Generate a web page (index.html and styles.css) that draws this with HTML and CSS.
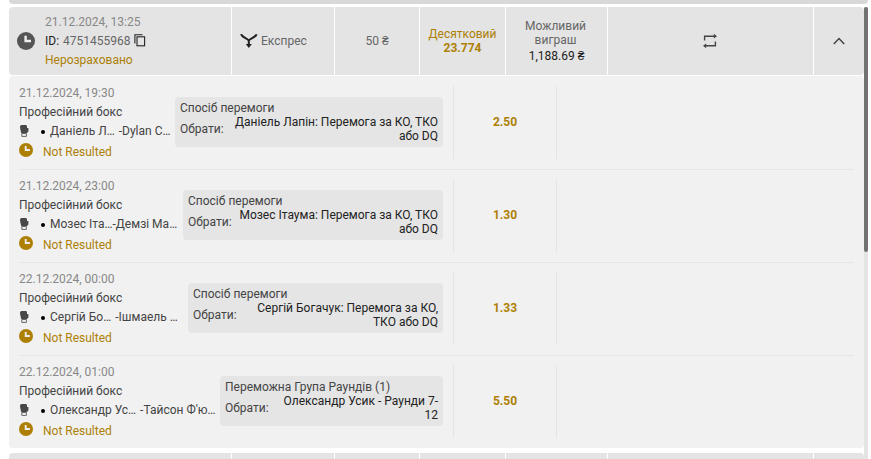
FILE: index.html
```html
<!DOCTYPE html>
<html lang="uk">
<head>
    <meta charset="UTF-8">
    <meta name="viewport" content="width=device-width, initial-scale=1.0">
    <title>Історія ставок</title>
    <link rel="stylesheet" href="styles.css">
</head>
<body>
    <svg class="sprite">
        <symbol id="clock" viewBox="0 0 18 18">
            <circle cx="9" cy="9" r="9" fill="currentColor"/>
            <path d="M8.6 3.8V9H14" fill="none" stroke="#eee" stroke-width="2.4"/>
        </symbol>
        <symbol id="glove" viewBox="0 0 10 12">
            <path d="M2.5 0H7Q8 0 8 1.5V3H9.4V6.4L8 8H2.2Q1 4 1 1.5Q1.2 0 2.5 0Z" fill="#484848"/>
            <path d="M2.8 8.5V11.4H7.4V8.5Z" fill="none" stroke="#666" stroke-width="1"/>
        </symbol>
    </svg>

    <div class="list-head"></div>
    <div class="history">
        <div class="bets">
            <div class="bet">
                <div class="cell bet-info">
                    <svg class="bet-clock"><use href="#clock"/></svg>
                    <div>
                        <div class="date">21.12.2024, 13:25</div>
                        <div class="bet-id"><b>ID:</b> <span>4751455968</span>
                            <svg width="12" height="13" viewBox="0 0 12 13" fill="none" stroke="#222" stroke-width="1.1"><path d="M.9 9.5V.7H8.5"/><rect x="3" y="2.8" width="7.6" height="9"/></svg>
                        </div>
                        <div class="gold">Нерозраховано</div>
                    </div>
                </div>
                <div class="cell type">
                    <svg width="18" height="16" viewBox="0 0 18 16" fill="none" stroke="#222" stroke-width="2"><path d="M1.2 1.2C1.5 4 6 4.8 8.8 7.4C11.5 4.8 16 4 16.6 1.2M8.8 7V13"/><path d="M5.8 11H11.8L8.8 15Z" fill="#222" stroke="none"/></svg>
                    <span>Експрес</span>
                </div>
                <div class="cell stake">50 ₴</div>
                <div class="cell odds gold">Десятковий<b>23.774</b></div>
                <div class="cell win">Можливий<br>виграш<span>1,188.69 ₴</span></div>
                <div class="cell repeat">
                    <svg width="16" height="16" viewBox="0 0 16 16" fill="none" stroke="#444" stroke-width="1.4"><path d="M2.6 7.5V3.2H12.5M13.4 8.5V12.8H3.5"/><path d="M11.8 .8L15 3.2L11.8 5.6ZM4.2 10.4L1 12.8L4.2 15.2Z" fill="#444" stroke="none"/></svg>
                </div>
                <div class="cell toggle">
                    <svg width="12" height="8" viewBox="0 0 12 8" fill="none" stroke="#444" stroke-width="1.5"><path d="M.8 7L6 1.5L11.2 7"/></svg>
                </div>
            </div>

            <div class="details">
                <div class="event">
                    <div class="info info-1">
                        <div class="date">21.12.2024, 19:30</div>
                        <div>Професійний бокс</div>
                        <div class="teams"><svg><use href="#glove"/></svg><i></i><span>Даніель Л…</span><span class="away spaced">-Dylan C…</span></div>
                        <div class="status gold"><svg><use href="#clock"/></svg>Not Resulted</div>
                    </div>
                    <div class="market">
                        <div>Спосіб перемоги</div>
                        <div class="pick"><span>Обрати:</span><p>Даніель Лапін: Перемога за КО, ТКО<br>або DQ</p></div>
                    </div>
                    <div class="price">2.50</div>
                </div>
                <div class="event">
                    <div class="info info-2">
                        <div class="date">21.12.2024, 23:00</div>
                        <div>Професійний бокс</div>
                        <div class="teams"><svg><use href="#glove"/></svg><i></i><span>Мозес Іта…</span><span class="away">-Демзі Ма…</span></div>
                        <div class="status gold"><svg><use href="#clock"/></svg>Not Resulted</div>
                    </div>
                    <div class="market">
                        <div>Спосіб перемоги</div>
                        <div class="pick"><span>Обрати:</span><p>Мозес Ітаума: Перемога за КО, ТКО<br>або DQ</p></div>
                    </div>
                    <div class="price">1.30</div>
                </div>
                <div class="event">
                    <div class="info info-3">
                        <div class="date">22.12.2024, 00:00</div>
                        <div>Професійний бокс</div>
                        <div class="teams"><svg><use href="#glove"/></svg><i></i><span>Сергій Бо…</span><span class="away spaced">-Ішмаель …</span></div>
                        <div class="status gold"><svg><use href="#clock"/></svg>Not Resulted</div>
                    </div>
                    <div class="market">
                        <div>Спосіб перемоги</div>
                        <div class="pick"><span>Обрати:</span><p>Сергій Богачук: Перемога за КО,<br>ТКО або DQ</p></div>
                    </div>
                    <div class="price">1.33</div>
                </div>
                <div class="event">
                    <div class="info info-4">
                        <div class="date">22.12.2024, 01:00</div>
                        <div>Професійний бокс</div>
                        <div class="teams"><svg><use href="#glove"/></svg><i></i><span>Олександр Ус…</span><span class="away spaced">-Тайсон Ф'ю…</span></div>
                        <div class="status gold"><svg><use href="#clock"/></svg>Not Resulted</div>
                    </div>
                    <div class="market">
                        <div>Переможна Група Раундів (1)</div>
                        <div class="pick"><span>Обрати:</span><p>Олександр Усик - Раунди 7-<br>12</p></div>
                    </div>
                    <div class="price">5.50</div>
                </div>
            </div>

            <div class="bet next">
                <div class="cell"></div>
                <div class="cell"></div>
                <div class="cell"></div>
                <div class="cell"></div>
                <div class="cell"></div>
                <div class="cell"></div>
                <div class="cell"></div>
            </div>
        </div>
        <div class="scrollbar"><div class="thumb"></div></div>
    </div>
</body>
</html>
```
FILE: styles.css
```css
* {
    box-sizing: border-box;
}
body {
    margin: 0;
    height: 459px;
    padding: 0 3px 0 9px;
    overflow: hidden;
    background-color: #fff;
    color: #444;
    font-family: Roboto, sans-serif;
    font-size: 12px;
    line-height: 14px;
}
svg {
    display: block;
    flex-shrink: 0;
}
.sprite {
    display: none;
}
.list-head {
    width: 859px;
    height: 4px;
    margin-bottom: 3px;
    border-radius: 0 0 4px 4px;
    background-color: #d8d8d8;
}
.history {
    display: flex;
    height: 452px;
}
.bets {
    width: 855px;
}
.bet {
    display: grid;
    grid-template-columns: 222px 102px 84px 85px 101px 205px 50px;
    gap: 1px;
    height: 68px;
    overflow: hidden;
    border-radius: 4px;
}
.cell {
    display: flex;
    align-items: center;
    justify-content: center;
    background-color: #e4e4e4;
    color: #666;
}
.date {
    color: #888;
}
.gold {
    color: #ad8005;
}
.bet-info {
    justify-content: flex-start;
    padding-left: 8px;
    line-height: 19px;
}
.bet-clock {
    width: 18px;
    height: 18px;
    margin-right: 10px;
    color: #555;
}
.bet-id {
    display: flex;
    align-items: center;
}
.bet-id b {
    margin-right: 4px;
    color: #222;
    font-weight: 400;
}
.bet-id svg {
    margin: -1px 0 0 3px;
}
.type {
    justify-content: flex-start;
    padding-left: 8px;
}
.type svg {
    margin-right: 3px;
}
.odds,
.win {
    flex-direction: column;
    text-align: center;
}
.odds {
    color: #ad8005;
}
.win {
    padding-right: 2px;
}
.win span {
    margin: 2px 0 0 2px;
    color: #222;
}
.repeat,
.toggle {
    padding-right: 1px;
}
.details {
    height: 372px;
    margin-top: 1px;
    padding: 0 10px;
    border-radius: 4px;
    background-color: #f1f1f1;
}
.event {
    display: flex;
    height: 93px;
    padding-top: 9px;
    border-bottom: 1px solid #e6e6e6;
}
.event:first-child {
    height: 94px;
    padding-top: 10px;
}
.event:last-child {
    height: 92px;
    border-bottom: none;
}
.info {
    flex-shrink: 0;
    margin-top: -2px;
    line-height: 19px;
    white-space: nowrap;
}
.info-1 {
    width: 156px;
}
.info-2 {
    width: 164px;
}
.info-3 {
    width: 169px;
}
.info-4 {
    width: 201px;
}
.teams {
    display: flex;
    align-items: center;
}
.teams svg {
    width: 10px;
    height: 12px;
    margin: -2px 12px 0 0;
}
.teams i {
    width: 4px;
    height: 4px;
    margin-right: 5px;
    border-radius: 50%;
    background-color: #000;
}
.teams .spaced {
    margin-left: 4px;
}
.status {
    display: flex;
    align-items: center;
    height: 23px;
}
.status svg {
    width: 14px;
    height: 14px;
    margin: -5px 10px 0 0;
}
.market {
    flex: 1;
    height: 50px;
    margin: 11px 10px 0 0;
    padding: 4px 5px;
    border-radius: 4px;
    background-color: #e5e5e5;
}
.pick {
    display: flex;
    align-items: center;
    justify-content: space-between;
}
.pick p {
    margin: 0;
    color: #222;
    text-align: right;
    white-space: nowrap;
}
.price {
    display: flex;
    align-items: center;
    justify-content: center;
    width: 104px;
    height: 73px;
    margin-right: 297px;
    padding-bottom: 2px;
    border: solid #e4e4e4;
    border-width: 0 1px;
    color: #ad8005;
    font-weight: 700;
}
.bet.next {
    height: 6px;
    margin-top: 5px;
    border-radius: 4px 4px 0 0;
}
.scrollbar {
    width: 4px;
    background-color: #e4e4e4;
}
.thumb {
    height: 245px;
    border-radius: 2px;
    background-color: #727272;
}
```
